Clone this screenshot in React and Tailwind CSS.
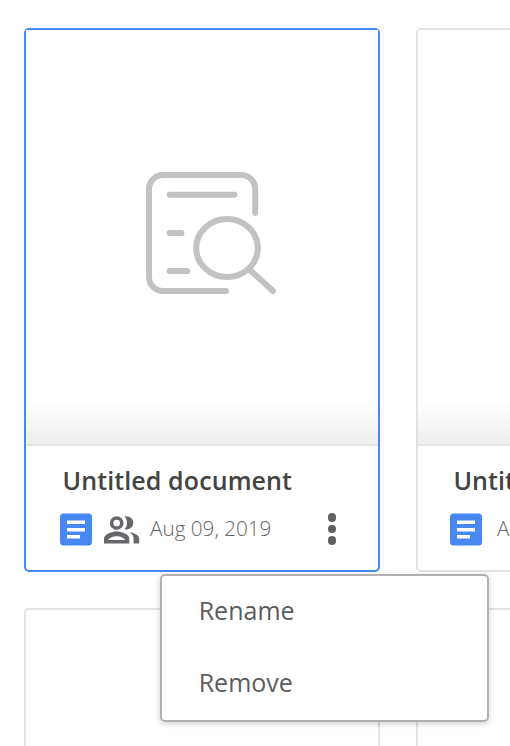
function PreviewIcon() {
  return (
    <svg width="160" height="150" viewBox="0 0 160 150" fill="none" stroke="#c2c2c2" strokeWidth="6" strokeLinecap="round" className="shrink-0">
      <path d="M125.2 53V29a14 14 0 0 0-14-14H33a14 14 0 0 0-14 14v88a14 14 0 0 0 14 14h63" />
      <path d="M39.7 34.8h64.7M39.7 73h11.7M39.7 111h17.5" />
      <ellipse cx="97" cy="88" rx="30.8" ry="29" />
      <path d="M120.5 110.5 143 131" />
    </svg>
  );
}

function DocIcon() {
  return (
    <svg width="32" height="33" viewBox="0 0 32 33" className="shrink-0">
      <rect y="0.5" width="32" height="32" rx="3.5" fill="#4788f2" />
      <path fill="#fff" d="M7 7.500h18v3.500H7zM7 14.900h18v3.500H7zM7 22.100h13v3.500H7z" />
    </svg>
  );
}

function PeopleIcon() {
  return (
    <svg width="36" height="28" viewBox="0 0 36 28" fill="#65676b" className="shrink-0">
      <circle cx="12.7" cy="7" r="5.1" fill="none" stroke="#65676b" strokeWidth="3.5" />
      <path fillRule="evenodd" d="M12.7 15.4C8.5 15.4 0 17.8 0 22.6V27.4h25.3v-4.8c0-4.8-8.4-7.2-12.6-7.2zM4 24.1c1.4-2.2 5.3-3.8 8.7-3.8s7.3 1.6 8.7 3.8z" />
      <path d="M20.6.5c7.4-1.2 11 6.200 7.200 10.600-1.700 2.200-4.500 2.900-7.200 2.200 3.300-4 3.300-8.800 0-12.800z" />
      <path d="M25.600 16.200c4.800.8 9.600 2.900 9.600 6.400v4.800h-5.600v-4.800c0-2.800-1.600-4.900-4-6.400z" />
    </svg>
  );
}

function Card({ active, shared }) {
  return (
    <article className={`flex h-[544px] w-[356px] shrink-0 flex-col rounded-[5px] border-2 bg-white ${active ? "border-[#4788f7]" : "border-[#e2e2e2]"}`}>
      <div className="flex h-[416px] shrink-0 flex-col border-b-2 border-[#e2e2e2] bg-[linear-gradient(to_bottom,#fff_0,#fff_372px,#eee_414px)] pt-[130px] pl-[104px]">
        {active && <PreviewIcon />}
      </div>
      <h2 className={`mt-[16px] h-9 whitespace-nowrap text-[25px] leading-9 font-semibold tracking-[0.1px] text-[#434343] ${active ? "ml-[36.600px]" : "ml-[35.400px]"}`}>
        Untitled document
      </h2>
      <div className={`mt-[15px] flex h-[33px] items-start ${active ? "ml-[34px]" : "ml-[32px]"}`}>
        <DocIcon />
        {shared && <div className="mt-[3px] ml-3"><PeopleIcon /></div>}
        <time className={`-mt-px whitespace-nowrap text-[20.700px] leading-8 font-light text-[#656565] ${shared ? "ml-[10px]" : "ml-[15px]"}`}>
          Aug 09, 2019
        </time>
        <button aria-label="More" className="mr-[42px] ml-auto flex flex-col gap-[3px]">
          <span className="size-[8.500px] rounded-full bg-[#606060]" />
          <span className="size-[8.500px] rounded-full bg-[#606060]" />
          <span className="size-[8.500px] rounded-full bg-[#606060]" />
        </button>
      </div>
    </article>
  );
}

export default function App() {
  return (
    <main className="relative h-[746px] w-[510px] overflow-hidden bg-white font-['Open_Sans',sans-serif]">
      <div className="grid grid-cols-[356px_356px] gap-9 pt-7 pl-6">
        <Card active shared />
        <Card />
        <div className="h-[138px] rounded-t-[5px] border-2 border-b-0 border-[#e2e2e2]" />
        <div className="h-[138px] rounded-t-[5px] border-2 border-b-0 border-[#e2e2e2]" />
      </div>
      <div className="absolute top-[574px] left-[160px] flex h-[148px] w-[329px] flex-col rounded-[5px] border-2 border-[#b1b1b1] bg-white text-[25px] text-[#5c5c5c] shadow-[0_2px_6px_rgba(0,0,0,0.18)]">
        <button className="h-[72px] pb-[3px] pl-[36.700px] text-left">Rename</button>
        <button className="h-[72px] pb-[3px] pl-[36.700px] text-left">Remove</button>
      </div>
    </main>
  );
}
